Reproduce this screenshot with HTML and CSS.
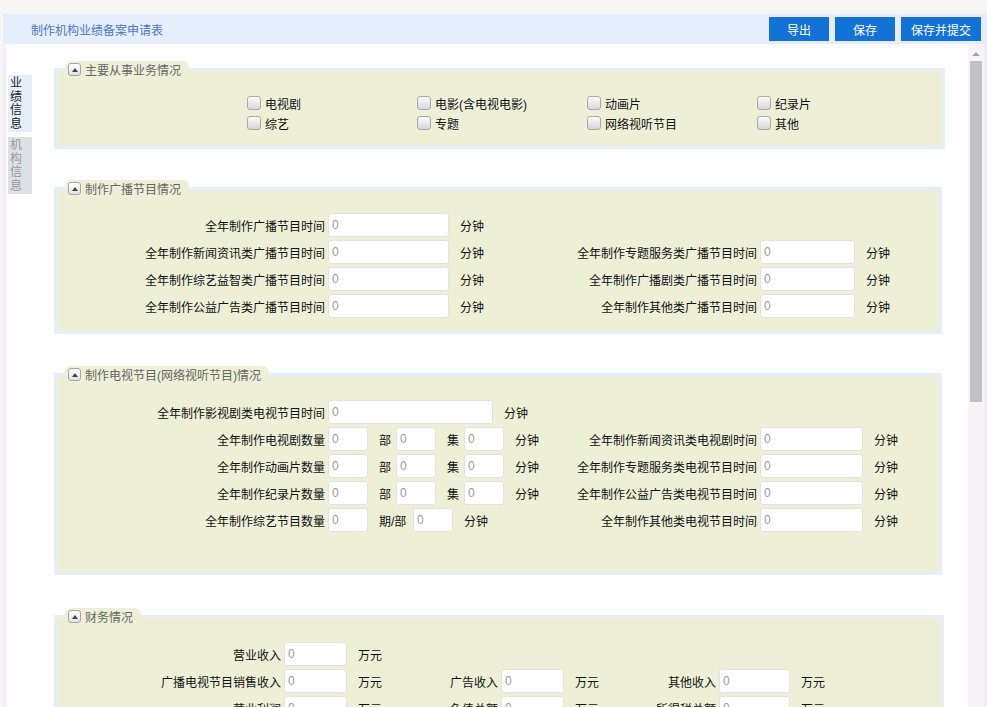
FILE: index.html
```html
<!DOCTYPE html>
<html lang="zh-CN">
<head>
<meta charset="utf-8">
<title>制作机构业绩备案申请表</title>
<link rel="stylesheet" href="styles.css">
</head>
<body>
<div class="topstrip"></div>
<div class="frame">
  <header class="header">
    <div class="title">制作机构业绩备案申请表</div>
    <div class="actions">
      <button class="btn">导出</button>
      <button class="btn">保存</button>
      <button class="btn btn-wide">保存并提交</button>
    </div>
  </header>
  <div class="body">
    <nav class="tabs">
      <div class="tab active"><span class="tab-text">业绩信息</span></div>
      <div class="tab"><span class="tab-text">机构信息</span></div>
    </nav>
    <main class="content">
      <section class="panel p1">
        <div class="legend"><span class="toggle"></span><span>主要从事业务情况</span></div>
        <div class="checks">
          <label class="check"><span class="box"></span>电视剧</label>
          <label class="check"><span class="box"></span>电影(含电视电影)</label>
          <label class="check"><span class="box"></span>动画片</label>
          <label class="check"><span class="box"></span>纪录片</label>
          <label class="check"><span class="box"></span>综艺</label>
          <label class="check"><span class="box"></span>专题</label>
          <label class="check"><span class="box"></span>网络视听节目</label>
          <label class="check"><span class="box"></span>其他</label>
        </div>
      </section>

      <section class="panel p2">
        <div class="legend"><span class="toggle"></span><span>制作广播节目情况</span></div>
        <div class="rows rows-a">
          <div class="row">
            <span class="lab l271">全年制作广播节目时间</span><input class="inp w121" type="text" value="0"><span class="unit u60">分钟</span>
          </div>
          <div class="row">
            <span class="lab l271">全年制作新闻资讯类广播节目时间</span><input class="inp w121" type="text" value="0"><span class="unit u60">分钟</span>
            <span class="lab l251">全年制作专题服务类广播节目时间</span><input class="inp w95" type="text" value="0"><span class="unit">分钟</span>
          </div>
          <div class="row">
            <span class="lab l271">全年制作综艺益智类广播节目时间</span><input class="inp w121" type="text" value="0"><span class="unit u60">分钟</span>
            <span class="lab l251">全年制作广播剧类广播节目时间</span><input class="inp w95" type="text" value="0"><span class="unit">分钟</span>
          </div>
          <div class="row">
            <span class="lab l271">全年制作公益广告类广播节目时间</span><input class="inp w121" type="text" value="0"><span class="unit u60">分钟</span>
            <span class="lab l251">全年制作其他类广播节目时间</span><input class="inp w95" type="text" value="0"><span class="unit">分钟</span>
          </div>
        </div>
      </section>

      <section class="panel p3">
        <div class="legend"><span class="toggle"></span><span>制作电视节目(网络视听节目)情况</span></div>
        <div class="rows rows-b">
          <div class="row">
            <span class="lab l271">全年制作影视剧类电视节目时间</span><input class="inp w165" type="text" value="0"><span class="unit">分钟</span>
          </div>
          <div class="row">
            <span class="lab l271">全年制作电视剧数量</span><input class="inp w40" type="text" value="0"><span class="unit u28">部</span><input class="inp w40" type="text" value="0"><span class="unit u28">集</span><input class="inp w40" type="text" value="0"><span class="unit u50">分钟</span>
            <span class="lab l206">全年制作新闻资讯类电视剧时间</span><input class="inp w103" type="text" value="0"><span class="unit">分钟</span>
          </div>
          <div class="row">
            <span class="lab l271">全年制作动画片数量</span><input class="inp w40" type="text" value="0"><span class="unit u28">部</span><input class="inp w40" type="text" value="0"><span class="unit u28">集</span><input class="inp w40" type="text" value="0"><span class="unit u50">分钟</span>
            <span class="lab l206">全年制作专题服务类电视节目时间</span><input class="inp w103" type="text" value="0"><span class="unit">分钟</span>
          </div>
          <div class="row">
            <span class="lab l271">全年制作纪录片数量</span><input class="inp w40" type="text" value="0"><span class="unit u28">部</span><input class="inp w40" type="text" value="0"><span class="unit u28">集</span><input class="inp w40" type="text" value="0"><span class="unit u50">分钟</span>
            <span class="lab l206">全年制作公益广告类电视节目时间</span><input class="inp w103" type="text" value="0"><span class="unit">分钟</span>
          </div>
          <div class="row">
            <span class="lab l271">全年制作综艺节目数量</span><input class="inp w40" type="text" value="0"><span class="unit u45">期/部</span><input class="inp w40" type="text" value="0"><span class="unit u101">分钟</span>
            <span class="lab l206">全年制作其他类电视节目时间</span><input class="inp w103" type="text" value="0"><span class="unit">分钟</span>
          </div>
        </div>
      </section>

      <section class="panel p4">
        <div class="legend"><span class="toggle"></span><span>财务情况</span></div>
        <div class="rows rows-c">
          <div class="row">
            <span class="lab l227">营业收入</span><input class="inp w63" type="text" value="0"><span class="unit u60">万元</span>
          </div>
          <div class="row">
            <span class="lab l227">广播电视节目销售收入</span><input class="inp w63" type="text" value="0"><span class="unit u60">万元</span>
            <span class="lab l94">广告收入</span><input class="inp w63" type="text" value="0"><span class="unit u60">万元</span>
            <span class="lab l95">其他收入</span><input class="inp w71" type="text" value="0"><span class="unit">万元</span>
          </div>
          <div class="row">
            <span class="lab l227">营业利润</span><input class="inp w63" type="text" value="0"><span class="unit u60">万元</span>
            <span class="lab l94">负债总额</span><input class="inp w63" type="text" value="0"><span class="unit u60">万元</span>
            <span class="lab l95">所得税总额</span><input class="inp w71" type="text" value="0"><span class="unit">万元</span>
          </div>
        </div>
      </section>
    </main>
    <div class="scrollbar">
      <div class="sb-up"><span class="sb-arrow"></span></div>
      <div class="sb-thumb"></div>
    </div>
  </div>
</div>
</body>
</html>
```

FILE: styles.css
```css
* { box-sizing: border-box; }
html, body { margin: 0; padding: 0; }
body {
  width: 987px;
  height: 707px;
  overflow: hidden;
  background: #f7f6f7;
  font-family: "Liberation Sans", "Noto Sans CJK SC", sans-serif;
  font-size: 12px;
  color: #111;
}
.topstrip { height: 14px; }
.frame {
  margin-left: 3px;
  height: 693px;
  display: flex;
  flex-direction: column;
  background: #f5eff5;
}
.header {
  flex: none;
  height: 30px;
  display: flex;
  align-items: center;
  justify-content: space-between;
  padding: 0 6px 0 28px;
  background: #e6eefc;
}
.title { color: #4a78c4; font-size: 12px; }
.actions { display: flex; gap: 6px; }
.btn {
  width: 60px;
  height: 24px;
  border: 0;
  padding: 0;
  background: #1272d6;
  color: #fff;
  font: 12px "Noto Sans CJK SC", sans-serif;
}
.btn-wide { width: 80px; }

.body {
  flex: 1;
  min-height: 0;
  display: flex;
  margin-left: 3px;
  background: #fff;
  border-right: 2px solid #e6eefc;
}
.tabs {
  flex: none;
  width: 48px;
  padding: 31px 0 0 2px;
  display: flex;
  flex-direction: column;
  gap: 5px;
}
.tab {
  width: 24px;
  height: 57px;
  padding: 2px 0 0 2px;
  background: #dde1e6;
  color: #999;
  font-size: 12px;
  line-height: 13.5px;
}
.tab.active { background: #e6eefc; color: #222; }
.tab-text { display: block; width: 12px; word-break: break-all; }

.content {
  flex: 1;
  overflow: hidden;
  padding-top: 24px;
}
.panel {
  border: 3px solid #e6eefc;
  background: #edf0d7;
}
.p1 { margin-right: 23px; }
.p2 { margin-right: 26px; margin-top: 38px; }
.p3 { margin-right: 26px; margin-top: 39px; }
.p4 { margin-right: 24px; margin-top: 40px; }

.legend {
  display: flex;
  align-items: center;
  gap: 4px;
  width: max-content;
  height: 17px;
  margin: -10px 0 0 8px;
  padding: 0 8px 0 3px;
  background: #edf0d7;
  border-radius: 6px 6px 0 0;
  color: #666;
}
.toggle {
  width: 13px;
  height: 13px;
  border: 1px solid #a5a5a5;
  border-radius: 3px;
  background: linear-gradient(#ffffff, #e2e2e2);
  display: flex;
  align-items: center;
  justify-content: center;
}
.toggle::after {
  content: "";
  border-left: 3.5px solid transparent;
  border-right: 3.5px solid transparent;
  border-bottom: 4px solid #444;
}

.checks {
  display: grid;
  grid-template-columns: repeat(4, 170px);
  grid-auto-rows: 20px;
  margin-top: 15px;
  padding: 0 0 13px 190px;
}
.check { display: flex; align-items: center; gap: 4px; white-space: nowrap; }
.box {
  width: 14px;
  height: 14px;
  border: 1px solid #a9a9a9;
  border-radius: 3px;
  background: linear-gradient(#fbfbfb, #d6d6d6);
}

.rows { display: flex; flex-direction: column; gap: 3px; }
.rows-a { margin-top: 16px; padding-bottom: 13px; }
.rows-b { margin-top: 17px; padding-bottom: 40px; }
.rows-c { margin-top: 17px; padding-bottom: 13px; }
.row { display: flex; align-items: center; height: 24px; }
.lab { flex: none; text-align: right; padding-right: 3px; white-space: nowrap; }
.unit { flex: none; padding-left: 11px; white-space: nowrap; }
.inp {
  flex: none;
  height: 24px;
  margin: 0;
  border: 1px solid #e2e2e2;
  border-radius: 3px;
  background: #fff;
  padding: 0 0 0 3px;
  font: 12px "Liberation Sans", sans-serif;
  color: #999;
  outline: none;
}

.l271 { width: 271px; }
.l251 { width: 251px; }
.l206 { width: 206px; }
.l227 { width: 227px; }
.l94 { width: 94px; }
.l95 { width: 95px; }
.w40 { width: 40px; }
.w63 { width: 63px; }
.w71 { width: 71px; }
.w95 { width: 95px; }
.w103 { width: 103px; }
.w121 { width: 121px; }
.w165 { width: 165px; }
.u28 { width: 28px; }
.u45 { width: 45px; }
.u50 { width: 50px; }
.u60 { width: 60px; }
.u101 { width: 101px; }

.scrollbar {
  flex: none;
  width: 17px;
  background: #f7f3f7;
  border-right: 1px solid #f5eff5;
  padding-left: 2px;
}
.sb-up {
  height: 17px;
  width: 12px;
  display: flex;
  justify-content: center;
  align-items: center;
  padding-top: 2px;
}
.sb-arrow {
  border-left: 4px solid transparent;
  border-right: 4px solid transparent;
  border-bottom: 4px solid #a3a3a3;
}
.sb-thumb { width: 12px; height: 341px; background: #c1c0c5; }
```
